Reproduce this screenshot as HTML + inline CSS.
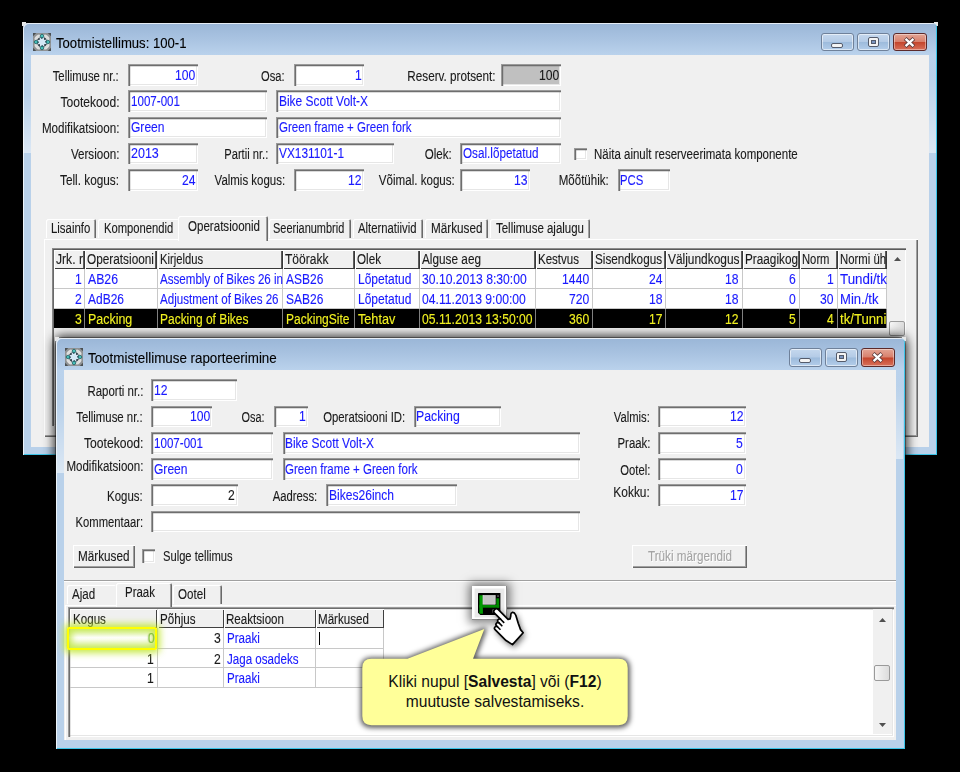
<!DOCTYPE html>
<html><head><meta charset="utf-8"><title>Tootmistellimus</title>
<style>
html,body{margin:0;padding:0;background:#000;}
body{width:960px;height:772px;position:relative;overflow:hidden;font-family:"Liberation Sans",sans-serif;}
#root{position:absolute;left:0;top:0;width:960px;height:772px;overflow:hidden;background:#000;}
#root div{position:absolute;box-sizing:border-box;}
.t{position:absolute;white-space:pre;line-height:18px;height:18px;-webkit-text-stroke:0.12px;}
svg{position:absolute;overflow:visible;}
</style></head><body><div id="root">
<div style="left:22.00px;top:22.00px;width:4.00px;height:4.00px;background:#e8e8e8;"></div>
<div style="left:934.00px;top:22.00px;width:4.00px;height:4.00px;background:#e8e8e8;"></div>
<div style="left:23.00px;top:23.00px;width:914.00px;height:431.90px;border-radius:5px 5px 0 0;background:linear-gradient(to bottom,#9ab6d7 0,#a9c3e1 16px,#bad2ec 32px,#b9d1ea 60px,#b9d1ea 100%);box-shadow:inset 1px 1px 0 rgba(255,255,255,.75), inset -1px -1px 0 #3cc4e8;"></div>
<div style="left:31.00px;top:55.20px;width:898.00px;height:392.10px;background:#f0f0f0;"></div>
<div style="left:23.00px;top:95.00px;width:8.00px;height:58.00px;background:linear-gradient(to bottom,rgba(255,255,255,0),rgba(255,255,255,.5));"></div>
<div style="left:929.00px;top:75.00px;width:7.00px;height:78.00px;background:linear-gradient(to bottom,rgba(255,255,255,0),rgba(255,255,255,.5));"></div>
<svg style="left:33.00px;top:32.80px" width="18" height="18" viewBox="0 0 18 18">
<rect x="0" y="0" width="18" height="18" fill="#8f9294"/>
<path d="M0 0H3.2L0 3.2ZM18 0H14.8L18 3.2ZM0 18H3.2L0 14.8ZM18 18H14.8L18 14.8Z" fill="#4a4f52"/>
<g fill="#dedede"><ellipse cx="4.6" cy="4.6" rx="3.6" ry="2.2" transform="rotate(-45 4.6 4.6)"/><ellipse cx="13.4" cy="4.6" rx="3.6" ry="2.2" transform="rotate(45 13.4 4.6)"/><ellipse cx="4.6" cy="13.4" rx="3.6" ry="2.2" transform="rotate(45 4.6 13.4)"/><ellipse cx="13.4" cy="13.4" rx="3.6" ry="2.2" transform="rotate(-45 13.4 13.4)"/></g>
<circle cx="9" cy="9" r="5.3" fill="#36444d"/><path d="M9 3.8L10.3 6.3L13 5L11.7 7.7L14.2 9L11.7 10.3L13 13L10.3 11.7L9 14.2L7.7 11.7L5 13L6.3 10.3L3.8 9L6.3 7.7L5 5L7.7 6.3Z" fill="#d4e8f6" transform="rotate(20 9 9)"/>
<path d="M9 0.9L11.1 3.1L9 5.3L6.9 3.1Z M9 12.7L11.1 14.9L9 17.1L6.9 14.9Z M0.9 9L3.1 6.9L5.3 9L3.1 11.1Z M12.7 9L14.9 6.9L17.1 9L14.9 11.1Z" fill="#2aa8a2" stroke="#1a5e64" stroke-width=".7"/>
<g fill="#6fd6cf"><circle cx="9" cy="2.9" r=".8"/><circle cx="9" cy="15.1" r=".8"/><circle cx="2.9" cy="9" r=".8"/><circle cx="15.1" cy="9" r=".8"/></g>
</svg>
<span class="t" style="left:55.60px;top:33.88px;font-size:14.2px;color:#000;transform:scaleX(0.9246);transform-origin:0 0">Tootmistellimus: 100-1</span>
<div style="left:820.90px;top:33.40px;width:33.10px;height:18.10px;background:linear-gradient(to bottom,#c5d8ee 0,#b4cbe6 48%,#9dbbdc 52%,#b3cdea 100%);border:1px solid #6f819a;border-radius:3px;box-shadow:inset 0 0 0 1px rgba(255,255,255,.55);"></div>
<div style="left:857.00px;top:33.40px;width:33.10px;height:18.10px;background:linear-gradient(to bottom,#c5d8ee 0,#b4cbe6 48%,#9dbbdc 52%,#b3cdea 100%);border:1px solid #6f819a;border-radius:3px;box-shadow:inset 0 0 0 1px rgba(255,255,255,.55);"></div>
<div style="left:893.00px;top:33.40px;width:33.60px;height:18.10px;background:linear-gradient(to bottom,#e3a595 0,#d8806c 48%,#c4452c 52%,#d8705a 100%);border:1px solid #5c2a2a;border-radius:3px;box-shadow:inset 0 0 0 1px rgba(255,255,255,.4);"></div>
<div style="left:831.45px;top:43.25px;width:12.00px;height:5.20px;background:#f4f4f4;border:1px solid #545b6b;border-radius:2px;"></div>
<div style="left:868.05px;top:37.45px;width:11.00px;height:9.50px;background:#f4f4f4;border:1px solid #545b6b;border-radius:2px;"></div>
<div style="left:871.05px;top:40.45px;width:5.00px;height:3.50px;background:#7b95c0;border:1px solid #545b6b;"></div>
<svg style="left:903.30px;top:37.25px" width="13" height="11" viewBox="0 0 16 14"><path d="M2.5 2 L13.5 12 M13.5 2 L2.5 12" stroke="#5a3a3a" stroke-width="5" stroke-linecap="butt"/><path d="M3 2.5 L13 11.5 M13 2.5 L3 11.5" stroke="#fff" stroke-width="3" stroke-linecap="butt"/></svg>
<span class="t" style="right:841.80px;top:66.65px;font-size:14.0px;color:#1a1a1a;transform:scaleX(0.8078);transform-origin:100% 0">Tellimuse nr.:</span>
<div style="left:127.50px;top:64.00px;width:70.00px;height:21.80px;background:#fff;box-shadow:inset 1px 1px 0 #9a9a9a, inset 2.2px 2.2px 0 #6e6e6e, inset -1px -1px 0 #ffffff, inset -2px -2px 0 #e6e6e6;"></div>
<span class="t" style="right:764.80px;top:65.85px;font-size:14.0px;color:#1a1aff;transform:scaleX(0.8680);transform-origin:100% 0">100</span>
<span class="t" style="right:675.50px;top:66.65px;font-size:14.0px;color:#1a1a1a;transform:scaleX(0.7945);transform-origin:100% 0">Osa:</span>
<div style="left:293.75px;top:64.00px;width:70.00px;height:21.80px;background:#fff;box-shadow:inset 1px 1px 0 #9a9a9a, inset 2.2px 2.2px 0 #6e6e6e, inset -1px -1px 0 #ffffff, inset -2px -2px 0 #e6e6e6;"></div>
<span class="t" style="right:598.60px;top:65.85px;font-size:14.0px;color:#1a1aff;transform:scaleX(0.8680);transform-origin:100% 0">1</span>
<span class="t" style="right:464.25px;top:66.65px;font-size:14.0px;color:#1a1a1a;transform:scaleX(0.8355);transform-origin:100% 0">Reserv. protsent:</span>
<div style="left:500.50px;top:64.00px;width:60.75px;height:21.80px;background:#c0c0c0;box-shadow:inset 1px 1px 0 #9a9a9a, inset 2.2px 2.2px 0 #6e6e6e, inset -1px -1px 0 #ffffff, inset -2px -2px 0 #e6e6e6;"></div>
<span class="t" style="right:400.60px;top:65.85px;font-size:14.0px;color:#1a1a1a;transform:scaleX(0.8680);transform-origin:100% 0">100</span>
<span class="t" style="right:840.50px;top:92.85px;font-size:14.0px;color:#1a1a1a;transform:scaleX(0.8613);transform-origin:100% 0">Tootekood:</span>
<div style="left:127.50px;top:90.20px;width:139.50px;height:21.80px;background:#fff;box-shadow:inset 1px 1px 0 #9a9a9a, inset 2.2px 2.2px 0 #6e6e6e, inset -1px -1px 0 #ffffff, inset -2px -2px 0 #e6e6e6;"></div>
<span class="t" style="left:130.50px;top:92.05px;font-size:14.0px;color:#1a1aff;transform:scaleX(0.8281);transform-origin:0 0">1007-001</span>
<div style="left:276.25px;top:90.20px;width:285.00px;height:21.80px;background:#fff;box-shadow:inset 1px 1px 0 #9a9a9a, inset 2.2px 2.2px 0 #6e6e6e, inset -1px -1px 0 #ffffff, inset -2px -2px 0 #e6e6e6;"></div>
<span class="t" style="left:279.00px;top:92.05px;font-size:14.0px;color:#1a1aff;transform:scaleX(0.8535);transform-origin:0 0">Bike Scott Volt-X</span>
<span class="t" style="right:840.50px;top:119.25px;font-size:14.0px;color:#1a1a1a;transform:scaleX(0.8298);transform-origin:100% 0">Modifikatsioon:</span>
<div style="left:127.50px;top:116.60px;width:139.50px;height:21.80px;background:#fff;box-shadow:inset 1px 1px 0 #9a9a9a, inset 2.2px 2.2px 0 #6e6e6e, inset -1px -1px 0 #ffffff, inset -2px -2px 0 #e6e6e6;"></div>
<span class="t" style="left:130.50px;top:118.45px;font-size:14.0px;color:#1a1aff;transform:scaleX(0.8607);transform-origin:0 0">Green</span>
<div style="left:276.25px;top:116.60px;width:285.00px;height:21.80px;background:#fff;box-shadow:inset 1px 1px 0 #9a9a9a, inset 2.2px 2.2px 0 #6e6e6e, inset -1px -1px 0 #ffffff, inset -2px -2px 0 #e6e6e6;"></div>
<span class="t" style="left:279.00px;top:118.45px;font-size:14.0px;color:#1a1aff;transform:scaleX(0.8246);transform-origin:0 0">Green frame + Green fork</span>
<span class="t" style="right:840.50px;top:145.25px;font-size:14.0px;color:#1a1a1a;transform:scaleX(0.8308);transform-origin:100% 0">Versioon:</span>
<div style="left:127.50px;top:142.60px;width:70.00px;height:21.80px;background:#fff;box-shadow:inset 1px 1px 0 #9a9a9a, inset 2.2px 2.2px 0 #6e6e6e, inset -1px -1px 0 #ffffff, inset -2px -2px 0 #e6e6e6;"></div>
<span class="t" style="left:130.50px;top:144.45px;font-size:14.0px;color:#1a1aff;transform:scaleX(0.8923);transform-origin:0 0">2013</span>
<span class="t" style="right:692.00px;top:145.25px;font-size:14.0px;color:#1a1a1a;transform:scaleX(0.7964);transform-origin:100% 0">Partii nr.:</span>
<div style="left:276.25px;top:142.60px;width:117.50px;height:21.80px;background:#fff;box-shadow:inset 1px 1px 0 #9a9a9a, inset 2.2px 2.2px 0 #6e6e6e, inset -1px -1px 0 #ffffff, inset -2px -2px 0 #e6e6e6;"></div>
<span class="t" style="left:279.00px;top:144.45px;font-size:14.0px;color:#1a1aff;transform:scaleX(0.8462);transform-origin:0 0">VX131101-1</span>
<span class="t" style="right:508.00px;top:145.25px;font-size:14.0px;color:#1a1a1a;transform:scaleX(0.8260);transform-origin:100% 0">Olek:</span>
<div style="left:460.00px;top:142.60px;width:101.25px;height:21.80px;background:#fff;box-shadow:inset 1px 1px 0 #9a9a9a, inset 2.2px 2.2px 0 #6e6e6e, inset -1px -1px 0 #ffffff, inset -2px -2px 0 #e6e6e6;"></div>
<span class="t" style="left:462.90px;top:144.45px;font-size:14.0px;color:#1a1aff;transform:scaleX(0.8350);transform-origin:0 0">Osal.lõpetatud</span>
<div style="left:573.75px;top:147.50px;width:13.00px;height:12.80px;background:#fff;box-shadow:inset 1px 1px 0 #9a9a9a, inset 2.2px 2.2px 0 #6e6e6e, inset -1px -1px 0 #ffffff, inset -2px -2px 0 #e6e6e6;"></div>
<span class="t" style="left:593.75px;top:145.25px;font-size:14.0px;color:#1a1a1a;transform:scaleX(0.8207);transform-origin:0 0">Näita ainult reserveerimata komponente</span>
<span class="t" style="right:840.50px;top:171.45px;font-size:14.0px;color:#1a1a1a;transform:scaleX(0.8423);transform-origin:100% 0">Tell. kogus:</span>
<div style="left:127.50px;top:168.80px;width:70.00px;height:21.80px;background:#fff;box-shadow:inset 1px 1px 0 #9a9a9a, inset 2.2px 2.2px 0 #6e6e6e, inset -1px -1px 0 #ffffff, inset -2px -2px 0 #e6e6e6;"></div>
<span class="t" style="right:764.80px;top:170.65px;font-size:14.0px;color:#1a1aff;transform:scaleX(0.8680);transform-origin:100% 0">24</span>
<span class="t" style="right:675.00px;top:171.45px;font-size:14.0px;color:#1a1a1a;transform:scaleX(0.8187);transform-origin:100% 0">Valmis kogus:</span>
<div style="left:293.75px;top:168.80px;width:70.00px;height:21.80px;background:#fff;box-shadow:inset 1px 1px 0 #9a9a9a, inset 2.2px 2.2px 0 #6e6e6e, inset -1px -1px 0 #ffffff, inset -2px -2px 0 #e6e6e6;"></div>
<span class="t" style="right:598.60px;top:170.65px;font-size:14.0px;color:#1a1aff;transform:scaleX(0.8680);transform-origin:100% 0">12</span>
<span class="t" style="right:505.00px;top:171.45px;font-size:14.0px;color:#1a1a1a;transform:scaleX(0.8276);transform-origin:100% 0">Võimal. kogus:</span>
<div style="left:460.00px;top:168.80px;width:69.50px;height:21.80px;background:#fff;box-shadow:inset 1px 1px 0 #9a9a9a, inset 2.2px 2.2px 0 #6e6e6e, inset -1px -1px 0 #ffffff, inset -2px -2px 0 #e6e6e6;"></div>
<span class="t" style="right:432.40px;top:170.65px;font-size:14.0px;color:#1a1aff;transform:scaleX(0.8680);transform-origin:100% 0">13</span>
<span class="t" style="right:351.25px;top:171.45px;font-size:14.0px;color:#1a1a1a;transform:scaleX(0.8237);transform-origin:100% 0">Mõõtühik:</span>
<div style="left:617.50px;top:168.80px;width:52.50px;height:21.80px;background:#fff;box-shadow:inset 1px 1px 0 #9a9a9a, inset 2.2px 2.2px 0 #6e6e6e, inset -1px -1px 0 #ffffff, inset -2px -2px 0 #e6e6e6;"></div>
<span class="t" style="left:620.20px;top:170.65px;font-size:14.0px;color:#1a1aff;transform:scaleX(0.8091);transform-origin:0 0">PCS</span>
<div style="left:43.75px;top:238.50px;width:873.85px;height:198.00px;background:#f0f0f0;box-shadow:inset 1px 1px 0 #ffffff, inset -1px -1px 0 #696969, inset -2px -2px 0 #a0a0a0;"></div>
<div style="left:45.50px;top:218.75px;width:50.75px;height:18.85px;background:#f0f0f0;box-shadow:inset 1px 1px 0 #ffffff, inset -1px 0 0 #696969, inset -2px 0 0 #a0a0a0;border-radius:2px 2px 0 0;"></div>
<span class="t" style="left:51.00px;top:219.35px;font-size:14.0px;color:#1a1a1a;transform:scaleX(0.8132);transform-origin:0 0">Lisainfo</span>
<div style="left:98.00px;top:218.75px;width:80.75px;height:18.85px;background:#f0f0f0;box-shadow:inset 1px 1px 0 #ffffff;border-radius:2px 2px 0 0;"></div>
<span class="t" style="left:103.50px;top:219.35px;font-size:14.0px;color:#1a1a1a;transform:scaleX(0.8014);transform-origin:0 0">Komponendid</span>
<div style="left:178.00px;top:216.25px;width:89.75px;height:24.25px;background:#f0f0f0;box-shadow:inset 1px 1px 0 #ffffff, inset -1px 0 0 #696969, inset -2px 0 0 #a0a0a0;border-radius:2px 2px 0 0;"></div>
<span class="t" style="left:187.88px;top:217.15px;font-size:14.0px;color:#1a1a1a;transform:scaleX(0.8260);transform-origin:0 0">Operatsioonid</span>
<div style="left:268.50px;top:218.75px;width:82.75px;height:18.85px;background:#f0f0f0;box-shadow:inset 1px 1px 0 #ffffff, inset -1px 0 0 #696969, inset -2px 0 0 #a0a0a0;border-radius:2px 2px 0 0;"></div>
<span class="t" style="left:273.10px;top:219.35px;font-size:14.0px;color:#1a1a1a;transform:scaleX(0.7824);transform-origin:0 0">Seerianumbrid</span>
<div style="left:353.00px;top:218.75px;width:70.00px;height:18.85px;background:#f0f0f0;box-shadow:inset 1px 1px 0 #ffffff, inset -1px 0 0 #696969, inset -2px 0 0 #a0a0a0;border-radius:2px 2px 0 0;"></div>
<span class="t" style="left:357.60px;top:219.35px;font-size:14.0px;color:#1a1a1a;transform:scaleX(0.8083);transform-origin:0 0">Alternatiivid</span>
<div style="left:425.00px;top:218.75px;width:63.00px;height:18.85px;background:#f0f0f0;box-shadow:inset 1px 1px 0 #ffffff, inset -1px 0 0 #696969, inset -2px 0 0 #a0a0a0;border-radius:2px 2px 0 0;"></div>
<span class="t" style="left:430.50px;top:219.35px;font-size:14.0px;color:#1a1a1a;transform:scaleX(0.8378);transform-origin:0 0">Märkused</span>
<div style="left:490.00px;top:218.75px;width:99.50px;height:18.85px;background:#f0f0f0;box-shadow:inset 1px 1px 0 #ffffff, inset -1px 0 0 #696969, inset -2px 0 0 #a0a0a0;border-radius:2px 2px 0 0;"></div>
<span class="t" style="left:495.50px;top:219.35px;font-size:14.0px;color:#1a1a1a;transform:scaleX(0.8193);transform-origin:0 0">Tellimuse ajalugu</span>
<div style="left:52.20px;top:248.10px;width:854.30px;height:177.90px;background:#f0f0f0;box-shadow:inset 0.9px 0.9px 0 #8c8c8c, inset 1.9px 1.9px 0 #5a5a5a, inset -1px -1px 0 #ffffff, inset -2px -2px 0 #e6e6e6;"></div>
<div style="left:54.10px;top:250.00px;width:31.20px;height:18.80px;background:#f0f0f0;box-shadow:inset 1px 1px 0 #fff, inset -1.8px -1px 0 #383838;"></div>
<div style="left:85.30px;top:250.00px;width:72.20px;height:18.80px;background:#f0f0f0;box-shadow:inset 1px 1px 0 #fff, inset -1.8px -1px 0 #383838;"></div>
<div style="left:157.50px;top:250.00px;width:125.50px;height:18.80px;background:#f0f0f0;box-shadow:inset 1px 1px 0 #fff, inset -1.8px -1px 0 #383838;"></div>
<div style="left:283.00px;top:250.00px;width:72.00px;height:18.80px;background:#f0f0f0;box-shadow:inset 1px 1px 0 #fff, inset -1.8px -1px 0 #383838;"></div>
<div style="left:355.00px;top:250.00px;width:64.50px;height:18.80px;background:#f0f0f0;box-shadow:inset 1px 1px 0 #fff, inset -1.8px -1px 0 #383838;"></div>
<div style="left:419.50px;top:250.00px;width:116.50px;height:18.80px;background:#f0f0f0;box-shadow:inset 1px 1px 0 #fff, inset -1.8px -1px 0 #383838;"></div>
<div style="left:536.00px;top:250.00px;width:57.00px;height:18.80px;background:#f0f0f0;box-shadow:inset 1px 1px 0 #fff, inset -1.8px -1px 0 #383838;"></div>
<div style="left:593.00px;top:250.00px;width:73.00px;height:18.80px;background:#f0f0f0;box-shadow:inset 1px 1px 0 #fff, inset -1.8px -1px 0 #383838;"></div>
<div style="left:666.00px;top:250.00px;width:76.50px;height:18.80px;background:#f0f0f0;box-shadow:inset 1px 1px 0 #fff, inset -1.8px -1px 0 #383838;"></div>
<div style="left:742.50px;top:250.00px;width:57.00px;height:18.80px;background:#f0f0f0;box-shadow:inset 1px 1px 0 #fff, inset -1.8px -1px 0 #383838;"></div>
<div style="left:799.50px;top:250.00px;width:38.00px;height:18.80px;background:#f0f0f0;box-shadow:inset 1px 1px 0 #fff, inset -1.8px -1px 0 #383838;"></div>
<div style="left:837.50px;top:250.00px;width:49.50px;height:18.80px;background:#f0f0f0;box-shadow:inset 1px 1px 0 #fff, inset -1.8px -1px 0 #383838;"></div>
<div style="left:54.10px;top:268.80px;width:832.90px;height:20.20px;background:#fff;"></div>
<div style="left:84.30px;top:268.80px;width:1.00px;height:20.20px;background:#c8c8c8;"></div>
<div style="left:156.50px;top:268.80px;width:1.00px;height:20.20px;background:#c8c8c8;"></div>
<div style="left:282.00px;top:268.80px;width:1.00px;height:20.20px;background:#c8c8c8;"></div>
<div style="left:354.00px;top:268.80px;width:1.00px;height:20.20px;background:#c8c8c8;"></div>
<div style="left:418.50px;top:268.80px;width:1.00px;height:20.20px;background:#c8c8c8;"></div>
<div style="left:535.00px;top:268.80px;width:1.00px;height:20.20px;background:#c8c8c8;"></div>
<div style="left:592.00px;top:268.80px;width:1.00px;height:20.20px;background:#c8c8c8;"></div>
<div style="left:665.00px;top:268.80px;width:1.00px;height:20.20px;background:#c8c8c8;"></div>
<div style="left:741.50px;top:268.80px;width:1.00px;height:20.20px;background:#c8c8c8;"></div>
<div style="left:798.50px;top:268.80px;width:1.00px;height:20.20px;background:#c8c8c8;"></div>
<div style="left:836.50px;top:268.80px;width:1.00px;height:20.20px;background:#c8c8c8;"></div>
<div style="left:886.00px;top:268.80px;width:1.00px;height:20.20px;background:#c8c8c8;"></div>
<div style="left:54.10px;top:288.00px;width:832.90px;height:1.00px;background:#c8c8c8;"></div>
<div style="left:54.10px;top:289.00px;width:832.90px;height:19.80px;background:#fff;"></div>
<div style="left:84.30px;top:289.00px;width:1.00px;height:19.80px;background:#c8c8c8;"></div>
<div style="left:156.50px;top:289.00px;width:1.00px;height:19.80px;background:#c8c8c8;"></div>
<div style="left:282.00px;top:289.00px;width:1.00px;height:19.80px;background:#c8c8c8;"></div>
<div style="left:354.00px;top:289.00px;width:1.00px;height:19.80px;background:#c8c8c8;"></div>
<div style="left:418.50px;top:289.00px;width:1.00px;height:19.80px;background:#c8c8c8;"></div>
<div style="left:535.00px;top:289.00px;width:1.00px;height:19.80px;background:#c8c8c8;"></div>
<div style="left:592.00px;top:289.00px;width:1.00px;height:19.80px;background:#c8c8c8;"></div>
<div style="left:665.00px;top:289.00px;width:1.00px;height:19.80px;background:#c8c8c8;"></div>
<div style="left:741.50px;top:289.00px;width:1.00px;height:19.80px;background:#c8c8c8;"></div>
<div style="left:798.50px;top:289.00px;width:1.00px;height:19.80px;background:#c8c8c8;"></div>
<div style="left:836.50px;top:289.00px;width:1.00px;height:19.80px;background:#c8c8c8;"></div>
<div style="left:886.00px;top:289.00px;width:1.00px;height:19.80px;background:#c8c8c8;"></div>
<div style="left:54.10px;top:307.80px;width:832.90px;height:1.00px;background:#c8c8c8;"></div>
<div style="left:54.10px;top:308.80px;width:832.90px;height:18.80px;background:#000;"></div>
<div style="left:84.30px;top:308.80px;width:1.00px;height:18.80px;background:#808080;"></div>
<div style="left:156.50px;top:308.80px;width:1.00px;height:18.80px;background:#808080;"></div>
<div style="left:282.00px;top:308.80px;width:1.00px;height:18.80px;background:#808080;"></div>
<div style="left:354.00px;top:308.80px;width:1.00px;height:18.80px;background:#808080;"></div>
<div style="left:418.50px;top:308.80px;width:1.00px;height:18.80px;background:#808080;"></div>
<div style="left:535.00px;top:308.80px;width:1.00px;height:18.80px;background:#808080;"></div>
<div style="left:592.00px;top:308.80px;width:1.00px;height:18.80px;background:#808080;"></div>
<div style="left:665.00px;top:308.80px;width:1.00px;height:18.80px;background:#808080;"></div>
<div style="left:741.50px;top:308.80px;width:1.00px;height:18.80px;background:#808080;"></div>
<div style="left:798.50px;top:308.80px;width:1.00px;height:18.80px;background:#808080;"></div>
<div style="left:836.50px;top:308.80px;width:1.00px;height:18.80px;background:#808080;"></div>
<div style="left:886.00px;top:308.80px;width:1.00px;height:18.80px;background:#808080;"></div>
<span class="t" style="left:56.10px;top:249.95px;font-size:14.0px;color:#1a1a1a;transform:scaleX(0.8679);transform-origin:0 0">Jrk. r</span>
<span class="t" style="left:87.30px;top:249.95px;font-size:14.0px;color:#1a1a1a;transform:scaleX(0.8439);transform-origin:0 0">Operatsiooni</span>
<span class="t" style="left:159.50px;top:249.95px;font-size:14.0px;color:#1a1a1a;transform:scaleX(0.8007);transform-origin:0 0">Kirjeldus</span>
<span class="t" style="left:285.00px;top:249.95px;font-size:14.0px;color:#1a1a1a;transform:scaleX(0.8601);transform-origin:0 0">Töörakk</span>
<span class="t" style="left:357.00px;top:249.95px;font-size:14.0px;color:#1a1a1a;transform:scaleX(0.8334);transform-origin:0 0">Olek</span>
<span class="t" style="left:421.50px;top:249.95px;font-size:14.0px;color:#1a1a1a;transform:scaleX(0.8421);transform-origin:0 0">Alguse aeg</span>
<span class="t" style="left:538.00px;top:249.95px;font-size:14.0px;color:#1a1a1a;transform:scaleX(0.8231);transform-origin:0 0">Kestvus</span>
<span class="t" style="left:595.00px;top:249.95px;font-size:14.0px;color:#1a1a1a;transform:scaleX(0.8357);transform-origin:0 0">Sisendkogus</span>
<span class="t" style="left:668.00px;top:249.95px;font-size:14.0px;color:#1a1a1a;transform:scaleX(0.8506);transform-origin:0 0">Väljundkogus</span>
<span class="t" style="left:744.50px;top:249.95px;font-size:14.0px;color:#1a1a1a;transform:scaleX(0.8406);transform-origin:0 0">Praagikog</span>
<span class="t" style="left:801.50px;top:249.95px;font-size:14.0px;color:#1a1a1a;transform:scaleX(0.8033);transform-origin:0 0">Norm</span>
<span class="t" style="left:839.50px;top:249.95px;font-size:14.0px;color:#1a1a1a;transform:scaleX(0.8099);transform-origin:0 0">Normi üh</span>
<span class="t" style="right:878.30px;top:269.55px;font-size:14.0px;color:#1a1aff;transform:scaleX(0.8680);transform-origin:100% 0">1</span>
<span class="t" style="left:88.10px;top:269.55px;font-size:14.0px;color:#1a1aff;transform:scaleX(0.8759);transform-origin:0 0">AB26</span>
<span class="t" style="left:160.30px;top:269.55px;font-size:14.0px;color:#1a1aff;transform:scaleX(0.8280);transform-origin:0 0">Assembly of Bikes 26 in</span>
<span class="t" style="left:285.80px;top:269.55px;font-size:14.0px;color:#1a1aff;transform:scaleX(0.8556);transform-origin:0 0">ASB26</span>
<span class="t" style="left:357.80px;top:269.55px;font-size:14.0px;color:#1a1aff;transform:scaleX(0.8588);transform-origin:0 0">Lõpetatud</span>
<span class="t" style="left:422.30px;top:269.55px;font-size:14.0px;color:#1a1aff;transform:scaleX(0.8680);transform-origin:0 0">30.10.2013 8:30:00</span>
<span class="t" style="right:370.60px;top:269.55px;font-size:14.0px;color:#1a1aff;transform:scaleX(0.8680);transform-origin:100% 0">1440</span>
<span class="t" style="right:297.60px;top:269.55px;font-size:14.0px;color:#1a1aff;transform:scaleX(0.8680);transform-origin:100% 0">24</span>
<span class="t" style="right:221.10px;top:269.55px;font-size:14.0px;color:#1a1aff;transform:scaleX(0.8680);transform-origin:100% 0">18</span>
<span class="t" style="right:164.10px;top:269.55px;font-size:14.0px;color:#1a1aff;transform:scaleX(0.8680);transform-origin:100% 0">6</span>
<span class="t" style="right:126.10px;top:269.55px;font-size:14.0px;color:#1a1aff;transform:scaleX(0.8680);transform-origin:100% 0">1</span>
<span class="t" style="left:840.30px;top:269.55px;font-size:14.0px;color:#1a1aff;transform:scaleX(0.9537);transform-origin:0 0">Tundi/tk</span>
<span class="t" style="right:878.30px;top:289.75px;font-size:14.0px;color:#1a1aff;transform:scaleX(0.8680);transform-origin:100% 0">2</span>
<span class="t" style="left:88.10px;top:289.75px;font-size:14.0px;color:#1a1aff;transform:scaleX(0.8562);transform-origin:0 0">AdB26</span>
<span class="t" style="left:160.30px;top:289.75px;font-size:14.0px;color:#1a1aff;transform:scaleX(0.8280);transform-origin:0 0">Adjustment of Bikes 26</span>
<span class="t" style="left:285.80px;top:289.75px;font-size:14.0px;color:#1a1aff;transform:scaleX(0.8556);transform-origin:0 0">SAB26</span>
<span class="t" style="left:357.80px;top:289.75px;font-size:14.0px;color:#1a1aff;transform:scaleX(0.8588);transform-origin:0 0">Lõpetatud</span>
<span class="t" style="left:422.30px;top:289.75px;font-size:14.0px;color:#1a1aff;transform:scaleX(0.8680);transform-origin:0 0">04.11.2013 9:00:00</span>
<span class="t" style="right:370.60px;top:289.75px;font-size:14.0px;color:#1a1aff;transform:scaleX(0.8680);transform-origin:100% 0">720</span>
<span class="t" style="right:297.60px;top:289.75px;font-size:14.0px;color:#1a1aff;transform:scaleX(0.8680);transform-origin:100% 0">18</span>
<span class="t" style="right:221.10px;top:289.75px;font-size:14.0px;color:#1a1aff;transform:scaleX(0.8680);transform-origin:100% 0">18</span>
<span class="t" style="right:164.10px;top:289.75px;font-size:14.0px;color:#1a1aff;transform:scaleX(0.8680);transform-origin:100% 0">0</span>
<span class="t" style="right:126.10px;top:289.75px;font-size:14.0px;color:#1a1aff;transform:scaleX(0.8680);transform-origin:100% 0">30</span>
<span class="t" style="left:840.30px;top:289.75px;font-size:14.0px;color:#1a1aff;transform:scaleX(0.9337);transform-origin:0 0">Min./tk</span>
<span class="t" style="right:878.30px;top:309.55px;font-size:14.0px;color:#f0f020;transform:scaleX(0.8680);transform-origin:100% 0">3</span>
<span class="t" style="left:88.10px;top:309.55px;font-size:14.0px;color:#f0f020;transform:scaleX(0.8893);transform-origin:0 0">Packing</span>
<span class="t" style="left:160.30px;top:309.55px;font-size:14.0px;color:#f0f020;transform:scaleX(0.8551);transform-origin:0 0">Packing of Bikes</span>
<span class="t" style="left:285.80px;top:309.55px;font-size:14.0px;color:#f0f020;transform:scaleX(0.8588);transform-origin:0 0">PackingSite</span>
<span class="t" style="left:357.80px;top:309.55px;font-size:14.0px;color:#f0f020;transform:scaleX(0.9042);transform-origin:0 0">Tehtav</span>
<span class="t" style="left:422.30px;top:309.55px;font-size:14.0px;color:#f0f020;transform:scaleX(0.8680);transform-origin:0 0">05.11.2013 13:50:00</span>
<span class="t" style="right:370.60px;top:309.55px;font-size:14.0px;color:#f0f020;transform:scaleX(0.8680);transform-origin:100% 0">360</span>
<span class="t" style="right:297.60px;top:309.55px;font-size:14.0px;color:#f0f020;transform:scaleX(0.8680);transform-origin:100% 0">17</span>
<span class="t" style="right:221.10px;top:309.55px;font-size:14.0px;color:#f0f020;transform:scaleX(0.8680);transform-origin:100% 0">12</span>
<span class="t" style="right:164.10px;top:309.55px;font-size:14.0px;color:#f0f020;transform:scaleX(0.8680);transform-origin:100% 0">5</span>
<span class="t" style="right:126.10px;top:309.55px;font-size:14.0px;color:#f0f020;transform:scaleX(0.8680);transform-origin:100% 0">4</span>
<span class="t" style="left:840.30px;top:309.55px;font-size:14.0px;color:#f0f020;transform:scaleX(0.9403);transform-origin:0 0">tk/Tunni:</span>
<div style="left:887.00px;top:250.50px;width:17.50px;height:86.50px;background:#f0f0f0;"></div>
<svg style="left:894.2px;top:256.8px" width="7" height="4" viewBox="0 0 7 4"><path d="M0 4L3.5 0L7 4Z" fill="#505050"/></svg>
<div style="left:889.00px;top:320.50px;width:16.00px;height:15.50px;background:linear-gradient(to right,#f6f6f6,#dcdcdc);border:1px solid #9a9a9a;border-radius:2px;"></div>
<div style="left:55.50px;top:338.00px;width:849.00px;height:410.50px;border-radius:6px 6px 0 0;box-shadow:0 0 0 1px rgba(0,0,0,.35), 0 0 11px 2px rgba(0,0,0,.85);"></div>
<div style="left:54.60px;top:337.00px;width:4.00px;height:4.00px;background:#e8e8e8;"></div>
<div style="left:901.50px;top:337.00px;width:4.00px;height:4.00px;background:#e8e8e8;"></div>
<div style="left:55.50px;top:338.00px;width:849.00px;height:410.50px;border-radius:5px 5px 0 0;background:linear-gradient(to bottom,#9ab6d7 0,#a9c3e1 16px,#bad2ec 32px,#b9d1ea 60px,#b9d1ea 100%);box-shadow:inset 1px 1px 0 rgba(255,255,255,.75), inset -1px -1px 0 #3cc4e8;"></div>
<div style="left:63.75px;top:370.00px;width:832.45px;height:370.20px;background:#f0f0f0;"></div>
<div style="left:56.50px;top:405.00px;width:7.25px;height:68.00px;background:linear-gradient(to bottom,rgba(255,255,255,0),rgba(255,255,255,.5));"></div>
<div style="left:896.20px;top:385.00px;width:7.30px;height:74.00px;background:linear-gradient(to bottom,rgba(255,255,255,0),rgba(255,255,255,.5));"></div>
<svg style="left:65.00px;top:347.80px" width="18" height="18" viewBox="0 0 18 18">
<rect x="0" y="0" width="18" height="18" fill="#8f9294"/>
<path d="M0 0H3.2L0 3.2ZM18 0H14.8L18 3.2ZM0 18H3.2L0 14.8ZM18 18H14.8L18 14.8Z" fill="#4a4f52"/>
<g fill="#dedede"><ellipse cx="4.6" cy="4.6" rx="3.6" ry="2.2" transform="rotate(-45 4.6 4.6)"/><ellipse cx="13.4" cy="4.6" rx="3.6" ry="2.2" transform="rotate(45 13.4 4.6)"/><ellipse cx="4.6" cy="13.4" rx="3.6" ry="2.2" transform="rotate(45 4.6 13.4)"/><ellipse cx="13.4" cy="13.4" rx="3.6" ry="2.2" transform="rotate(-45 13.4 13.4)"/></g>
<circle cx="9" cy="9" r="5.3" fill="#36444d"/><path d="M9 3.8L10.3 6.3L13 5L11.7 7.7L14.2 9L11.7 10.3L13 13L10.3 11.7L9 14.2L7.7 11.7L5 13L6.3 10.3L3.8 9L6.3 7.7L5 5L7.7 6.3Z" fill="#d4e8f6" transform="rotate(20 9 9)"/>
<path d="M9 0.9L11.1 3.1L9 5.3L6.9 3.1Z M9 12.7L11.1 14.9L9 17.1L6.9 14.9Z M0.9 9L3.1 6.9L5.3 9L3.1 11.1Z M12.7 9L14.9 6.9L17.1 9L14.9 11.1Z" fill="#2aa8a2" stroke="#1a5e64" stroke-width=".7"/>
<g fill="#6fd6cf"><circle cx="9" cy="2.9" r=".8"/><circle cx="9" cy="15.1" r=".8"/><circle cx="2.9" cy="9" r=".8"/><circle cx="15.1" cy="9" r=".8"/></g>
</svg>
<span class="t" style="left:88.00px;top:348.88px;font-size:14.2px;color:#000;transform:scaleX(0.9424);transform-origin:0 0">Tootmistellimuse raporteerimine</span>
<div style="left:788.75px;top:348.00px;width:33.25px;height:18.80px;background:linear-gradient(to bottom,#c5d8ee 0,#b4cbe6 48%,#9dbbdc 52%,#b3cdea 100%);border:1px solid #6f819a;border-radius:3px;box-shadow:inset 0 0 0 1px rgba(255,255,255,.55);"></div>
<div style="left:825.00px;top:348.00px;width:33.25px;height:18.80px;background:linear-gradient(to bottom,#c5d8ee 0,#b4cbe6 48%,#9dbbdc 52%,#b3cdea 100%);border:1px solid #6f819a;border-radius:3px;box-shadow:inset 0 0 0 1px rgba(255,255,255,.55);"></div>
<div style="left:860.75px;top:348.00px;width:33.75px;height:18.80px;background:linear-gradient(to bottom,#e3a595 0,#d8806c 48%,#c4452c 52%,#d8705a 100%);border:1px solid #5c2a2a;border-radius:3px;box-shadow:inset 0 0 0 1px rgba(255,255,255,.4);"></div>
<div style="left:799.38px;top:358.20px;width:12.00px;height:5.20px;background:#f4f4f4;border:1px solid #545b6b;border-radius:2px;"></div>
<div style="left:836.12px;top:352.40px;width:11.00px;height:9.50px;background:#f4f4f4;border:1px solid #545b6b;border-radius:2px;"></div>
<div style="left:839.12px;top:355.40px;width:5.00px;height:3.50px;background:#7b95c0;border:1px solid #545b6b;"></div>
<svg style="left:871.12px;top:352.20px" width="13" height="11" viewBox="0 0 16 14"><path d="M2.5 2 L13.5 12 M13.5 2 L2.5 12" stroke="#5a3a3a" stroke-width="5" stroke-linecap="butt"/><path d="M3 2.5 L13 11.5 M13 2.5 L3 11.5" stroke="#fff" stroke-width="3" stroke-linecap="butt"/></svg>
<span class="t" style="right:817.00px;top:381.90px;font-size:14.0px;color:#1a1a1a;transform:scaleX(0.8177);transform-origin:100% 0">Raporti nr.:</span>
<div style="left:150.75px;top:379.25px;width:86.45px;height:21.80px;background:#fff;box-shadow:inset 1px 1px 0 #9a9a9a, inset 2.2px 2.2px 0 #6e6e6e, inset -1px -1px 0 #ffffff, inset -2px -2px 0 #e6e6e6;"></div>
<span class="t" style="left:154.00px;top:381.10px;font-size:14.0px;color:#1a1aff;transform:scaleX(0.8680);transform-origin:0 0">12</span>
<span class="t" style="right:817.00px;top:408.15px;font-size:14.0px;color:#1a1a1a;transform:scaleX(0.8139);transform-origin:100% 0">Tellimuse nr.:</span>
<div style="left:150.75px;top:405.50px;width:61.25px;height:21.80px;background:#fff;box-shadow:inset 1px 1px 0 #9a9a9a, inset 2.2px 2.2px 0 #6e6e6e, inset -1px -1px 0 #ffffff, inset -2px -2px 0 #e6e6e6;"></div>
<span class="t" style="right:750.00px;top:407.35px;font-size:14.0px;color:#1a1aff;transform:scaleX(0.8680);transform-origin:100% 0">100</span>
<span class="t" style="right:695.00px;top:408.15px;font-size:14.0px;color:#1a1a1a;transform:scaleX(0.7776);transform-origin:100% 0">Osa:</span>
<div style="left:273.75px;top:405.50px;width:34.25px;height:21.80px;background:#fff;box-shadow:inset 1px 1px 0 #9a9a9a, inset 2.2px 2.2px 0 #6e6e6e, inset -1px -1px 0 #ffffff, inset -2px -2px 0 #e6e6e6;"></div>
<span class="t" style="right:654.40px;top:407.35px;font-size:14.0px;color:#1a1aff;transform:scaleX(0.8680);transform-origin:100% 0">1</span>
<span class="t" style="right:555.00px;top:408.15px;font-size:14.0px;color:#1a1a1a;transform:scaleX(0.8105);transform-origin:100% 0">Operatsiooni ID:</span>
<div style="left:413.75px;top:405.50px;width:86.75px;height:21.80px;background:#fff;box-shadow:inset 1px 1px 0 #9a9a9a, inset 2.2px 2.2px 0 #6e6e6e, inset -1px -1px 0 #ffffff, inset -2px -2px 0 #e6e6e6;"></div>
<span class="t" style="left:416.20px;top:407.35px;font-size:14.0px;color:#1a1aff;transform:scaleX(0.8793);transform-origin:0 0">Packing</span>
<span class="t" style="right:310.00px;top:408.15px;font-size:14.0px;color:#1a1a1a;transform:scaleX(0.8025);transform-origin:100% 0">Valmis:</span>
<div style="left:658.25px;top:405.50px;width:87.25px;height:21.80px;background:#fff;box-shadow:inset 1px 1px 0 #9a9a9a, inset 2.2px 2.2px 0 #6e6e6e, inset -1px -1px 0 #ffffff, inset -2px -2px 0 #e6e6e6;"></div>
<span class="t" style="right:216.80px;top:407.35px;font-size:14.0px;color:#1a1aff;transform:scaleX(0.8680);transform-origin:100% 0">12</span>
<span class="t" style="right:817.00px;top:434.40px;font-size:14.0px;color:#1a1a1a;transform:scaleX(0.8686);transform-origin:100% 0">Tootekood:</span>
<div style="left:150.75px;top:431.75px;width:121.75px;height:21.80px;background:#fff;box-shadow:inset 1px 1px 0 #9a9a9a, inset 2.2px 2.2px 0 #6e6e6e, inset -1px -1px 0 #ffffff, inset -2px -2px 0 #e6e6e6;"></div>
<span class="t" style="left:154.00px;top:433.60px;font-size:14.0px;color:#1a1aff;transform:scaleX(0.8281);transform-origin:0 0">1007-001</span>
<div style="left:282.50px;top:431.75px;width:297.00px;height:21.80px;background:#fff;box-shadow:inset 1px 1px 0 #9a9a9a, inset 2.2px 2.2px 0 #6e6e6e, inset -1px -1px 0 #ffffff, inset -2px -2px 0 #e6e6e6;"></div>
<span class="t" style="left:285.20px;top:433.60px;font-size:14.0px;color:#1a1aff;transform:scaleX(0.8535);transform-origin:0 0">Bike Scott Volt-X</span>
<span class="t" style="right:310.00px;top:434.40px;font-size:14.0px;color:#1a1a1a;transform:scaleX(0.8154);transform-origin:100% 0">Praak:</span>
<div style="left:658.25px;top:431.75px;width:87.25px;height:21.80px;background:#fff;box-shadow:inset 1px 1px 0 #9a9a9a, inset 2.2px 2.2px 0 #6e6e6e, inset -1px -1px 0 #ffffff, inset -2px -2px 0 #e6e6e6;"></div>
<span class="t" style="right:216.80px;top:433.60px;font-size:14.0px;color:#1a1aff;transform:scaleX(0.8680);transform-origin:100% 0">5</span>
<span class="t" style="right:817.00px;top:456.85px;font-size:14.0px;color:#1a1a1a;transform:scaleX(0.8245);transform-origin:100% 0">Modifikatsioon:</span>
<div style="left:150.75px;top:458.00px;width:121.75px;height:21.80px;background:#fff;box-shadow:inset 1px 1px 0 #9a9a9a, inset 2.2px 2.2px 0 #6e6e6e, inset -1px -1px 0 #ffffff, inset -2px -2px 0 #e6e6e6;"></div>
<span class="t" style="left:154.00px;top:459.85px;font-size:14.0px;color:#1a1aff;transform:scaleX(0.8607);transform-origin:0 0">Green</span>
<div style="left:282.50px;top:458.00px;width:297.00px;height:21.80px;background:#fff;box-shadow:inset 1px 1px 0 #9a9a9a, inset 2.2px 2.2px 0 #6e6e6e, inset -1px -1px 0 #ffffff, inset -2px -2px 0 #e6e6e6;"></div>
<span class="t" style="left:285.20px;top:459.85px;font-size:14.0px;color:#1a1aff;transform:scaleX(0.8246);transform-origin:0 0">Green frame + Green fork</span>
<span class="t" style="right:310.00px;top:460.65px;font-size:14.0px;color:#1a1a1a;transform:scaleX(0.8030);transform-origin:100% 0">Ootel:</span>
<div style="left:658.25px;top:458.00px;width:87.25px;height:21.80px;background:#fff;box-shadow:inset 1px 1px 0 #9a9a9a, inset 2.2px 2.2px 0 #6e6e6e, inset -1px -1px 0 #ffffff, inset -2px -2px 0 #e6e6e6;"></div>
<span class="t" style="right:216.80px;top:459.85px;font-size:14.0px;color:#1a1aff;transform:scaleX(0.8680);transform-origin:100% 0">0</span>
<span class="t" style="right:817.00px;top:486.95px;font-size:14.0px;color:#1a1a1a;transform:scaleX(0.8143);transform-origin:100% 0">Kogus:</span>
<div style="left:150.75px;top:484.30px;width:86.75px;height:21.80px;background:#fff;box-shadow:inset 1px 1px 0 #9a9a9a, inset 2.2px 2.2px 0 #6e6e6e, inset -1px -1px 0 #ffffff, inset -2px -2px 0 #e6e6e6;"></div>
<span class="t" style="right:724.80px;top:486.15px;font-size:14.0px;color:#1a1a1a;transform:scaleX(0.8680);transform-origin:100% 0">2</span>
<span class="t" style="right:642.50px;top:486.95px;font-size:14.0px;color:#1a1a1a;transform:scaleX(0.8054);transform-origin:100% 0">Aadress:</span>
<div style="left:326.25px;top:484.30px;width:130.50px;height:21.80px;background:#fff;box-shadow:inset 1px 1px 0 #9a9a9a, inset 2.2px 2.2px 0 #6e6e6e, inset -1px -1px 0 #ffffff, inset -2px -2px 0 #e6e6e6;"></div>
<span class="t" style="left:328.60px;top:486.15px;font-size:14.0px;color:#1a1aff;transform:scaleX(0.8609);transform-origin:0 0">Bikes26inch</span>
<span class="t" style="right:310.00px;top:483.15px;font-size:14.0px;color:#1a1a1a;transform:scaleX(0.8526);transform-origin:100% 0">Kokku:</span>
<div style="left:658.25px;top:484.30px;width:87.25px;height:21.80px;background:#fff;box-shadow:inset 1px 1px 0 #9a9a9a, inset 2.2px 2.2px 0 #6e6e6e, inset -1px -1px 0 #ffffff, inset -2px -2px 0 #e6e6e6;"></div>
<span class="t" style="right:216.80px;top:486.15px;font-size:14.0px;color:#1a1aff;transform:scaleX(0.8680);transform-origin:100% 0">17</span>
<span class="t" style="right:817.00px;top:513.25px;font-size:14.0px;color:#1a1a1a;transform:scaleX(0.8031);transform-origin:100% 0">Kommentaar:</span>
<div style="left:150.75px;top:510.60px;width:428.75px;height:21.80px;background:#fff;box-shadow:inset 1px 1px 0 #9a9a9a, inset 2.2px 2.2px 0 #6e6e6e, inset -1px -1px 0 #ffffff, inset -2px -2px 0 #e6e6e6;"></div>
<div style="left:72.50px;top:545.00px;width:62.00px;height:23.00px;background:#f0f0f0;box-shadow:inset 1px 1px 0 #ffffff, inset -1px -1px 0 #696969, inset -2px -2px 0 #a0a0a0;"></div>
<span class="t" style="left:77.80px;top:546.95px;font-size:14.0px;color:#1a1a1a;transform:scaleX(0.8378);transform-origin:0 0">Märkused</span>
<div style="left:141.75px;top:549.25px;width:13.25px;height:13.25px;background:#fff;box-shadow:inset 1px 1px 0 #9a9a9a, inset 2.2px 2.2px 0 #6e6e6e, inset -1px -1px 0 #ffffff, inset -2px -2px 0 #e6e6e6;"></div>
<span class="t" style="left:162.50px;top:546.95px;font-size:14.0px;color:#1a1a1a;transform:scaleX(0.7974);transform-origin:0 0">Sulge tellimus</span>
<div style="left:632.30px;top:545.20px;width:114.30px;height:22.80px;background:#f0f0f0;box-shadow:inset 1px 1px 0 #ffffff, inset -1px -1px 0 #696969, inset -2px -2px 0 #a0a0a0;"></div>
<span class="t" style="left:647.60px;top:546.55px;font-size:14.0px;color:#a4a4a4;text-shadow:1px 1px 0 #fff;transform:scaleX(0.8347);transform-origin:0 0">Trüki märgendid</span>
<div style="left:63.75px;top:580.00px;width:832.45px;height:1.00px;background:#a0a0a0;"></div>
<div style="left:63.75px;top:581.00px;width:832.45px;height:1.00px;background:#ffffff;"></div>
<div style="left:64.50px;top:604.50px;width:831.70px;height:135.70px;background:#f0f0f0;box-shadow:inset 1px 1px 0 #ffffff;"></div>
<div style="left:66.75px;top:585.00px;width:49.25px;height:18.50px;background:#f0f0f0;box-shadow:inset 1px 1px 0 #ffffff;border-radius:2px 2px 0 0;"></div>
<span class="t" style="left:72.05px;top:584.95px;font-size:14.0px;color:#1a1a1a;transform:scaleX(0.8280);transform-origin:0 0">Ajad</span>
<div style="left:115.50px;top:582.50px;width:56.80px;height:24.50px;background:#f0f0f0;box-shadow:inset 1px 1px 0 #ffffff, inset -1px 0 0 #696969, inset -2px 0 0 #a0a0a0;border-radius:2px 2px 0 0;"></div>
<span class="t" style="left:125.00px;top:582.65px;font-size:14.0px;color:#1a1a1a;transform:scaleX(0.8202);transform-origin:0 0">Praak</span>
<div style="left:172.50px;top:585.00px;width:49.70px;height:18.50px;background:#f0f0f0;box-shadow:inset 1px 1px 0 #ffffff, inset -1px 0 0 #696969, inset -2px 0 0 #a0a0a0;border-radius:2px 2px 0 0;"></div>
<span class="t" style="left:177.80px;top:584.95px;font-size:14.0px;color:#1a1a1a;transform:scaleX(0.8280);transform-origin:0 0">Ootel</span>
<div style="left:68.30px;top:606.50px;width:826.20px;height:130.00px;background:#fff;box-shadow:inset 1px 1px 0 #9a9a9a, inset 2.2px 2.2px 0 #6e6e6e, inset -1px -1px 0 #ffffff, inset -2px -2px 0 #e6e6e6;"></div>
<div style="left:70.30px;top:608.70px;width:87.20px;height:19.40px;background:#f0f0f0;box-shadow:inset 1px 1px 0 #fff, inset -1px -1px 0 #404040;"></div>
<span class="t" style="left:72.50px;top:609.95px;font-size:14.0px;color:#1a1a1a;transform:scaleX(0.8280);transform-origin:0 0">Kogus</span>
<div style="left:157.50px;top:608.70px;width:66.75px;height:19.40px;background:#f0f0f0;box-shadow:inset 1px 1px 0 #fff, inset -1px -1px 0 #404040;"></div>
<span class="t" style="left:159.70px;top:609.95px;font-size:14.0px;color:#1a1a1a;transform:scaleX(0.8280);transform-origin:0 0">Põhjus</span>
<div style="left:224.25px;top:608.70px;width:91.75px;height:19.40px;background:#f0f0f0;box-shadow:inset 1px 1px 0 #fff, inset -1px -1px 0 #404040;"></div>
<span class="t" style="left:226.45px;top:609.95px;font-size:14.0px;color:#1a1a1a;transform:scaleX(0.8280);transform-origin:0 0">Reaktsioon</span>
<div style="left:316.00px;top:608.70px;width:67.50px;height:19.40px;background:#f0f0f0;box-shadow:inset 1px 1px 0 #fff, inset -1px -1px 0 #404040;"></div>
<span class="t" style="left:318.20px;top:609.95px;font-size:14.0px;color:#1a1a1a;transform:scaleX(0.8280);transform-origin:0 0">Märkused</span>
<div style="left:156.50px;top:628.10px;width:1.00px;height:20.90px;background:#c8c8c8;"></div>
<div style="left:223.25px;top:628.10px;width:1.00px;height:20.90px;background:#c8c8c8;"></div>
<div style="left:315.00px;top:628.10px;width:1.00px;height:20.90px;background:#c8c8c8;"></div>
<div style="left:382.50px;top:628.10px;width:1.00px;height:20.90px;background:#c8c8c8;"></div>
<div style="left:70.30px;top:648.00px;width:313.20px;height:1.00px;background:#c8c8c8;"></div>
<span class="t" style="right:806.10px;top:629.05px;font-size:14.0px;color:#1a1a1a;transform:scaleX(0.8680);transform-origin:100% 0">0</span>
<span class="t" style="right:739.35px;top:629.05px;font-size:14.0px;color:#1a1a1a;transform:scaleX(0.8680);transform-origin:100% 0">3</span>
<span class="t" style="left:227.05px;top:629.05px;font-size:14.0px;color:#1a1aff;transform:scaleX(0.8280);transform-origin:0 0">Praaki</span>
<div style="left:156.50px;top:649.00px;width:1.00px;height:19.20px;background:#c8c8c8;"></div>
<div style="left:223.25px;top:649.00px;width:1.00px;height:19.20px;background:#c8c8c8;"></div>
<div style="left:315.00px;top:649.00px;width:1.00px;height:19.20px;background:#c8c8c8;"></div>
<div style="left:382.50px;top:649.00px;width:1.00px;height:19.20px;background:#c8c8c8;"></div>
<div style="left:70.30px;top:667.20px;width:313.20px;height:1.00px;background:#c8c8c8;"></div>
<span class="t" style="right:806.10px;top:649.95px;font-size:14.0px;color:#1a1a1a;transform:scaleX(0.8680);transform-origin:100% 0">1</span>
<span class="t" style="right:739.35px;top:649.95px;font-size:14.0px;color:#1a1a1a;transform:scaleX(0.8680);transform-origin:100% 0">2</span>
<span class="t" style="left:227.05px;top:649.95px;font-size:14.0px;color:#1a1aff;transform:scaleX(0.8280);transform-origin:0 0">Jaga osadeks</span>
<div style="left:156.50px;top:668.20px;width:1.00px;height:19.40px;background:#c8c8c8;"></div>
<div style="left:223.25px;top:668.20px;width:1.00px;height:19.40px;background:#c8c8c8;"></div>
<div style="left:315.00px;top:668.20px;width:1.00px;height:19.40px;background:#c8c8c8;"></div>
<div style="left:382.50px;top:668.20px;width:1.00px;height:19.40px;background:#c8c8c8;"></div>
<div style="left:70.30px;top:686.60px;width:313.20px;height:1.00px;background:#c8c8c8;"></div>
<span class="t" style="right:806.10px;top:669.15px;font-size:14.0px;color:#1a1a1a;transform:scaleX(0.8680);transform-origin:100% 0">1</span>
<span class="t" style="left:227.05px;top:669.15px;font-size:14.0px;color:#1a1aff;transform:scaleX(0.8280);transform-origin:0 0">Praaki</span>
<div style="left:319.30px;top:631.50px;width:1.00px;height:13.50px;background:#000;"></div>
<div style="left:872.75px;top:608.70px;width:19.55px;height:125.80px;background:#f0f0f0;"></div>
<svg style="left:878.6px;top:617.6px" width="7" height="4" viewBox="0 0 7 4"><path d="M0 4L3.5 0L7 4Z" fill="#505050"/></svg>
<svg style="left:878.6px;top:722.8px" width="7" height="4" viewBox="0 0 7 4"><path d="M0 0L3.5 4L7 0Z" fill="#505050"/></svg>
<div style="left:873.50px;top:664.50px;width:16.00px;height:16.20px;background:linear-gradient(to right,#f6f6f6,#dcdcdc);border:1px solid #9a9a9a;border-radius:2px;"></div>
<div style="left:67.30px;top:627.20px;width:90.00px;height:23.10px;border:2.6px solid #ffff00;border-radius:2px;box-shadow:0 0 7px 3px rgba(190,230,40,.85), inset 0 0 6px 3px rgba(190,230,60,.8);background:linear-gradient(to bottom,rgba(215,240,150,.7),rgba(255,255,255,.9) 45%,rgba(215,240,150,.7));"></div>
<span class="t" style="right:805.70px;top:629.35px;font-size:14.0px;color:#86c440;transform:scaleX(0.8680);transform-origin:100% 0">0</span>
<div style="left:471.80px;top:585.90px;width:34.80px;height:34.60px;background:#e9e9e9;box-shadow:0 0 9px 3px rgba(0,0,0,.5), inset -1px -1px 0 #8c8c8c, inset 0 0 0 2.6px #ffffff;"></div>
<svg style="left:477.7px;top:592.7px" width="22.4" height="22.1" viewBox="0 0 22.4 22.1">
<path d="M0.6 0H22.4V22.1H2.4L0 19.8V0.6Z" fill="#000"/>
<rect x="1.3" y="2.2" width="3.7" height="18.6" fill="#008a00"/>
<rect x="1.3" y="11.9" width="19.9" height="2.8" fill="#008a00"/>
<rect x="18.3" y="5.3" width="2.9" height="9.4" fill="#008a00"/>
<rect x="2.3" y="3" width="1.5" height="17" fill="#00a000"/>
<rect x="5" y="2.5" width="12.2" height="8.7" fill="#c4c4c4" stroke="#dadada" stroke-width=".7"/>
<rect x="14.6" y="16.5" width="2.6" height="3.1" fill="#c4c4c4"/>
<rect x="19.4" y="2.4" width="1.3" height="1.3" fill="#9a9a9a"/>
</svg>
<svg style="left:0;top:0" width="960" height="772" viewBox="0 0 960 772">
<defs><filter id="sh" x="-10%" y="-10%" width="120%" height="130%"><feGaussianBlur stdDeviation="2.8"/></filter></defs>
<path d="M371.5 658.8H407.5L484.3 629L473 658.8H618.5Q627.7 658.8 627.7 668V716Q627.7 725.2 618.5 725.2H371.5Q362.3 725.2 362.3 716V668Q362.3 658.8 371.5 658.8Z" fill="rgba(0,0,0,.5)" stroke="rgba(0,0,0,.5)" stroke-width="5" stroke-linejoin="round" filter="url(#sh)" transform="translate(0.2,0.6)"/>
<path d="M371.5 658.8H407.5L484.3 629L473 658.8H618.5Q627.7 658.8 627.7 668V716Q627.7 725.2 618.5 725.2H371.5Q362.3 725.2 362.3 716V668Q362.3 658.8 371.5 658.8Z" fill="#ffff99"/>
</svg>
<div style="left:362.3px;top:672px;width:265.4px;height:50px;text-align:center;font-size:15.6px;line-height:20.4px;color:#111;white-space:nowrap;">Kliki nupul [<b>Salvesta</b>] või (<b>F12</b>)<br>muutuste salvestamiseks.</div>
<svg style="left:0;top:0" width="960" height="772" viewBox="0 0 960 772">
<defs><filter id="hs" x="-40%" y="-40%" width="180%" height="180%"><feGaussianBlur stdDeviation="3"/></filter></defs>
<g transform="translate(494.6 609.6) rotate(-45)">
<path d="M-2.6 10.2V2.4Q-2.6 0 0 0Q2.6 0 2.6 2.4V16.4L4.3 17.5L7 15.9Q8.8 13.5 10.7 14.6Q12.2 15.7 11 19L7.1 26.3L4.2 32.5L3.8 36.6L-12.1 37.4L-13.8 30V14.5Q-13.8 12.6-12 12.6Q-10.2 12.6-10.1 14V12.6Q-10 11-8.2 11Q-6.4 11-6.3 12.5V11Q-6.2 9.6-4.4 9.6Q-2.8 9.6-2.6 11Z" fill="rgba(0,0,0,.6)" filter="url(#hs)" transform="translate(-0.6 3.2)"/>
<path d="M-2.6 10.2V2.4Q-2.6 0 0 0Q2.6 0 2.6 2.4V16.4L4.3 17.5L7 15.9Q8.8 13.5 10.7 14.6Q12.2 15.7 11 19L7.1 26.3L4.2 32.5L3.8 36.6L-12.1 37.4L-13.8 30V14.5Q-13.8 12.6-12 12.6Q-10.2 12.6-10.1 14V12.6Q-10 11-8.2 11Q-6.4 11-6.3 12.5V11Q-6.2 9.6-4.4 9.6Q-2.8 9.6-2.6 11Z" fill="#fff" stroke="#000" stroke-width="1.7" stroke-linejoin="round"/>
<path d="M-2.6 10V16.2M-6.3 12.2V17.2M-10.1 13.8V18.4" stroke="#000" stroke-width="1.6" fill="none"/>
</g></svg>
</div></body></html>
